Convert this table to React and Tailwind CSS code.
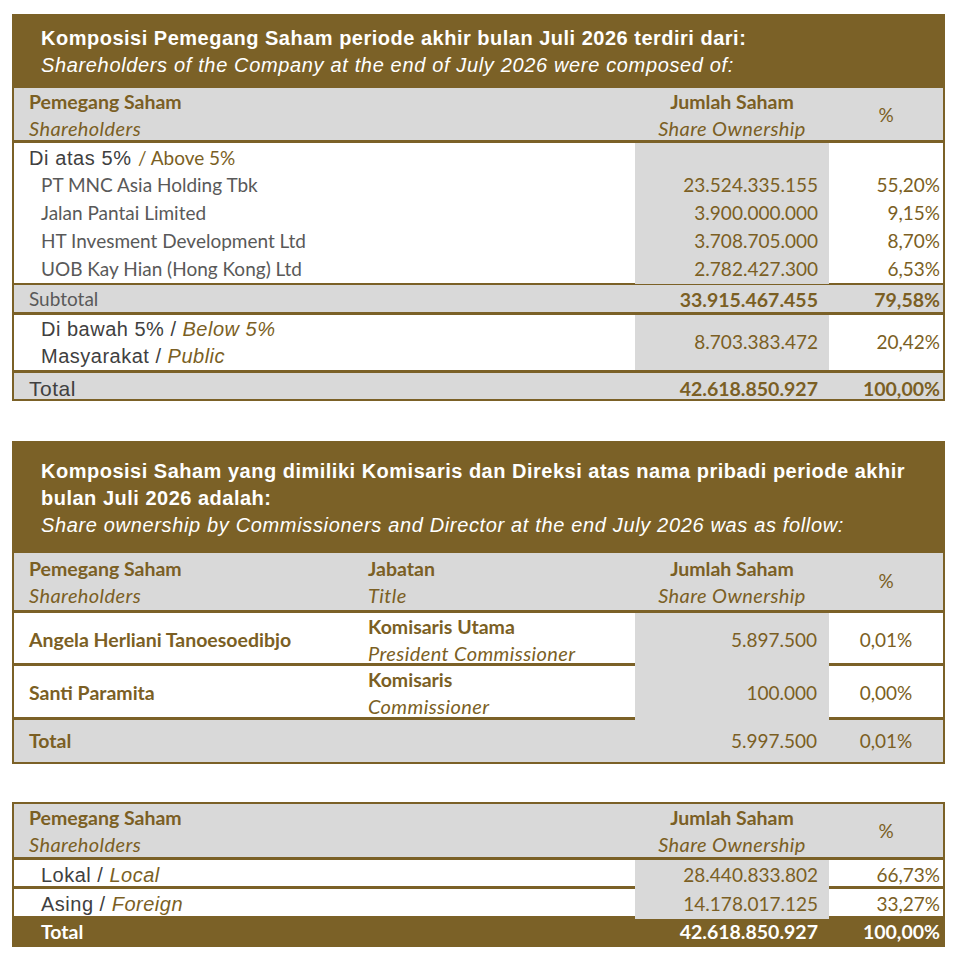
import React from "react";

/* shared class bits */
const cal = "font-['Lato',sans-serif]";
const arial = "font-['Liberation_Sans',Arial,sans-serif]";
const brownText = "text-[#7b5f24]";

const Line = ({ h = "h-[3px]" }) => <div className={`${h} bg-[#7b6127]`} />;

/* ── Column header (gray) ─────────────────────────────────────────── */
function ColHead({ cols, title, h }) {
  return (
    <div className={`grid ${cols} ${h} bg-[#d9d9d9] ${cal} ${brownText}`}>
      {title}
    </div>
  );
}

function HeadCell({ top, bottom, className = "" }) {
  return (
    <div className={`flex flex-col justify-center leading-[27px] ${className}`}>
      <div className="text-[19.5px] font-bold">{top}</div>
      <div className="text-[20px] italic tracking-[0.4px]">{bottom}</div>
    </div>
  );
}

/* ── Table 1 ──────────────────────────────────────────────────────── */
const bigHolders = [
  ["PT MNC Asia Holding Tbk", "23.524.335.155", "55,20%"],
  ["Jalan Pantai Limited", "3.900.000.000", "9,15%"],
  ["HT Invesment Development Ltd", "3.708.705.000", "8,70%"],
  ["UOB Kay Hian (Hong Kong) Ltd", "2.782.427.300", "6,53%"],
];

function Table1() {
  const cols = "grid-cols-[621px_194px_114px]";
  return (
    <div className="ml-[12px] mt-[14px] w-[933px] border-x-2 border-[#7b6127]">
      <div className={`h-[74px] bg-[#7b6127] pl-[27px] pt-[11px] ${arial} text-[20px] leading-[27px] text-white`}>
        <div className="font-bold tracking-[0.5px]">Komposisi Pemegang Saham periode akhir bulan Juli 2026 terdiri dari:</div>
        <div className="italic tracking-[0.65px]">Shareholders of the Company at the end of July 2026 were composed of:</div>
      </div>

      <ColHead
        cols={cols}
        h="h-[52px]"
        title={
          <>
            <HeadCell className="pl-[15px]" top="Pemegang Saham" bottom="Shareholders" />
            <HeadCell className="items-center" top="Jumlah Saham" bottom="Share Ownership" />
            <div className="flex items-center justify-center text-[19px]">%</div>
          </>
        }
      />
      <Line />

      {/* above 5% */}
      <div className={`grid ${cols} h-[28px] items-stretch`}>
        <div className="flex items-center pl-[15px]">
          <span className={`${arial} text-[20px] tracking-[0.6px] text-[#404040]`}>Di atas 5%&nbsp;</span>
          <span className={`${cal} text-[19px] ${brownText}`}>/ Above 5%</span>
        </div>
        <div className="bg-[#d9d9d9]" />
        <div />
      </div>
      {bigHolders.map(([name, qty, pct]) => (
        <div key={name} className={`grid ${cols} h-[28px] ${cal} text-[19px]`}>
          <div className="flex items-center pl-[27px] text-[#595959]">{name}</div>
          <div className={`flex items-center justify-end bg-[#d9d9d9] pr-[11px] ${brownText}`}>{qty}</div>
          <div className={`flex items-center justify-end pr-[3px] ${brownText}`}>{pct}</div>
        </div>
      ))}
      <Line h="h-[2px]" />

      {/* subtotal */}
      <div className={`grid ${cols} h-[27px] bg-[#d9d9d9] ${cal} text-[19px]`}>
        <div className="flex items-center pl-[15px] text-[#595959]">Subtotal</div>
        <div className={`flex items-center justify-end pr-[11px] text-[19.5px] font-bold ${brownText}`}>33.915.467.455</div>
        <div className={`flex items-center justify-end pr-[3px] text-[19.5px] font-bold ${brownText}`}>79,58%</div>
      </div>
      <Line />

      {/* below 5% */}
      <div className={`grid ${cols} h-[55px]`}>
        <div className={`flex flex-col justify-center pl-[27px] ${arial} text-[20px] leading-[27px] tracking-[0.5px] text-[#404040]`}>
          <div>
            Di bawah 5% / <span className={`italic ${brownText}`}>Below 5%</span>
          </div>
          <div>
            Masyarakat / <span className={`italic ${brownText}`}>Public</span>
          </div>
        </div>
        <div className={`flex items-center justify-end bg-[#d9d9d9] pr-[11px] ${cal} text-[19px] ${brownText}`}>8.703.383.472</div>
        <div className={`flex items-center justify-end pr-[3px] ${cal} text-[19px] ${brownText}`}>20,42%</div>
      </div>
      <Line />

      {/* total */}
      <div className={`grid ${cols} h-[26px] bg-[#d9d9d9]`}>
        <div className={`flex items-center pl-[15px] ${arial} text-[21px] tracking-[0.5px] text-[#404040]`}>Total</div>
        <div className={`flex items-center justify-end pr-[11px] ${cal} text-[19.5px] font-bold ${brownText}`}>42.618.850.927</div>
        <div className={`flex items-center justify-end pr-[3px] ${cal} text-[19.5px] font-bold ${brownText}`}>100,00%</div>
      </div>
      <Line h="h-[2px]" />
    </div>
  );
}

/* ── Table 2 ──────────────────────────────────────────────────────── */
const board = [
  ["Angela Herliani Tanoesoedibjo", "Komisaris Utama", "President Commissioner", "5.897.500", "0,01%", "h-[50px]"],
  ["Santi Paramita", "Komisaris", "Commissioner", "100.000", "0,00%", "h-[51px]"],
];

function Table2() {
  const cols = "grid-cols-[339px_282px_194px_114px]";
  return (
    <div className="ml-[12px] mt-[40px] w-[933px] border-x-2 border-[#7b6127]">
      <div className={`h-[112px] bg-[#7b6127] pl-[27px] pt-[17px] ${arial} text-[20px] leading-[27px] text-white`}>
        <div className="font-bold tracking-[0.5px]">
          Komposisi Saham yang dimiliki Komisaris dan Direksi atas nama pribadi periode akhir
          <br />
          bulan Juli 2026 adalah:
        </div>
        <div className="italic tracking-[0.65px]">Share ownership by Commissioners and Director at the end July 2026 was as follow:</div>
      </div>

      <ColHead
        cols={cols}
        h="h-[57px]"
        title={
          <>
            <HeadCell className="pl-[15px]" top="Pemegang Saham" bottom="Shareholders" />
            <HeadCell className="pl-[15px]" top="Jabatan" bottom="Title" />
            <HeadCell className="items-center" top="Jumlah Saham" bottom="Share Ownership" />
            <div className="flex items-center justify-center text-[19px]">%</div>
          </>
        }
      />
      <Line />

      {board.map(([name, title, titleEn, qty, pct, h], i) => (
        <React.Fragment key={name}>
          {i > 0 && <Line />}
          <div className={`grid ${cols} ${h} ${cal} ${brownText}`}>
            <div className="flex items-center pl-[15px] text-[19.5px] font-bold">{name}</div>
            <div className="flex flex-col justify-center pl-[15px] leading-[27px]">
              <div className="text-[19.5px] font-bold">{title}</div>
              <div className="text-[20px] italic tracking-[0.4px]">{titleEn}</div>
            </div>
            <div className="flex items-center justify-end bg-[#d9d9d9] pr-[12px] text-[19px]">{qty}</div>
            <div className="flex items-center justify-center text-[19px]">{pct}</div>
          </div>
        </React.Fragment>
      ))}
      <Line />

      <div className={`grid ${cols} h-[42px] bg-[#d9d9d9] ${cal} ${brownText}`}>
        <div className="flex items-center pl-[15px] text-[19.5px] font-bold">Total</div>
        <div />
        <div className="flex items-center justify-end pr-[12px] text-[19px]">5.997.500</div>
        <div className="flex items-center justify-center text-[19px]">0,01%</div>
      </div>
      <Line h="h-[2px]" />
    </div>
  );
}

/* ── Table 3 ──────────────────────────────────────────────────────── */
const origin = [
  ["Lokal", "Local", "28.440.833.802", "66,73%", "h-[26px]"],
  ["Asing", "Foreign", "14.178.017.125", "33,27%", "h-[27px]"],
];

function Table3() {
  const cols = "grid-cols-[621px_194px_114px]";
  return (
    <div className="ml-[12px] mt-[38px] w-[933px] border-x-2 border-t-2 border-[#7b6127]">
      <ColHead
        cols={cols}
        h="h-[53px]"
        title={
          <>
            <HeadCell className="pl-[15px]" top="Pemegang Saham" bottom="Shareholders" />
            <HeadCell className="items-center" top="Jumlah Saham" bottom="Share Ownership" />
            <div className="flex items-center justify-center text-[19px]">%</div>
          </>
        }
      />
      {origin.map(([id, en, qty, pct, h]) => (
        <React.Fragment key={id}>
          <Line />
          <div className={`grid ${cols} ${h}`}>
            <div className={`flex items-center pl-[27px] ${arial} text-[20px] tracking-[0.5px] text-[#404040]`}>
              {id} /&nbsp;<span className={`italic ${brownText}`}>{en}</span>
            </div>
            <div className={`flex items-center justify-end bg-[#d9d9d9] pr-[11px] ${cal} text-[19px] ${brownText}`}>{qty}</div>
            <div className={`flex items-center justify-end pr-[3px] ${cal} text-[19px] ${brownText}`}>{pct}</div>
          </div>
        </React.Fragment>
      ))}
      <div className={`grid ${cols} h-[31px] bg-[#7b6127] ${cal} font-bold text-white`}>
        <div className="flex items-center pl-[27px] text-[19.5px]">Total</div>
        <div className="flex items-center justify-end pr-[11px] text-[19.5px]">42.618.850.927</div>
        <div className="flex items-center justify-end pr-[3px] text-[19.5px]">100,00%</div>
      </div>
    </div>
  );
}

export default function App() {
  return (
    <div className="h-[959px] w-[959px] overflow-hidden bg-white">
      <Table1 />
      <Table2 />
      <Table3 />
    </div>
  );
}
